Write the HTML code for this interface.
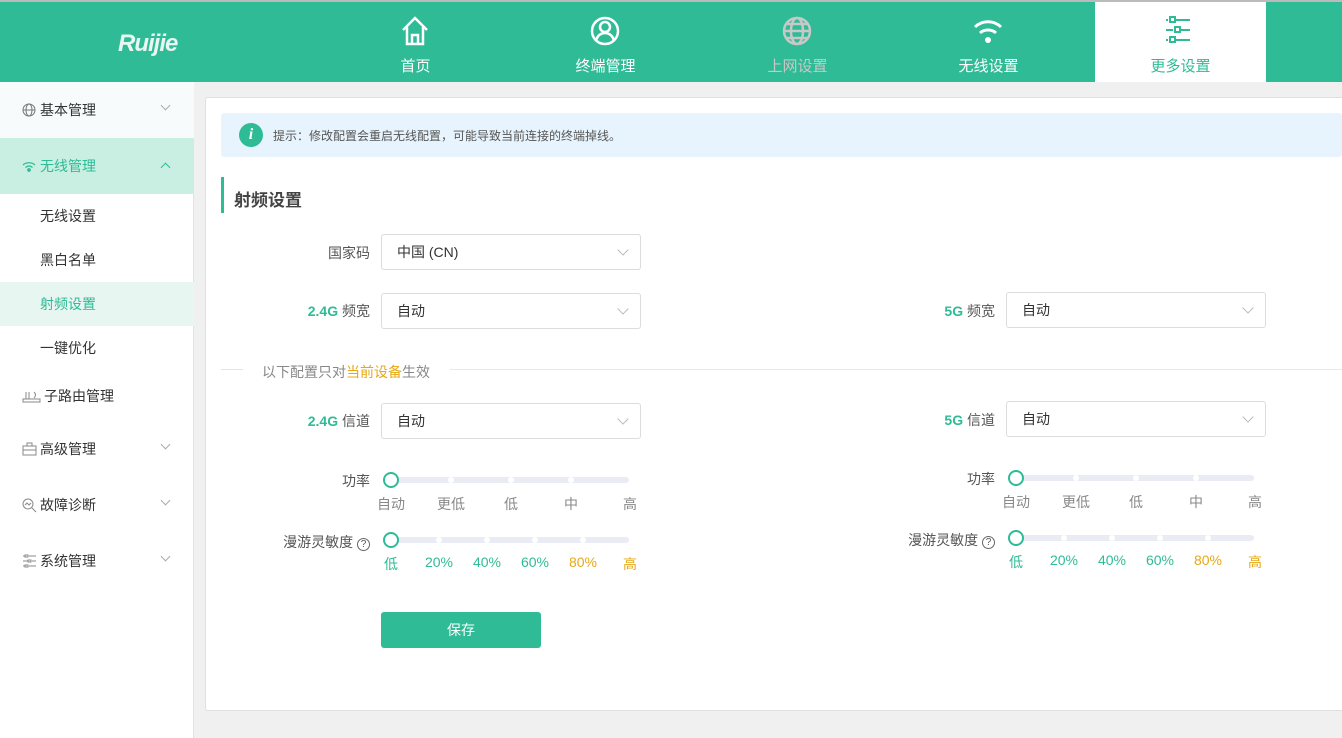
<!DOCTYPE html>
<html><head><meta charset="utf-8"><style>
*{margin:0;padding:0;box-sizing:border-box}
body{width:1342px;height:738px;overflow:hidden;background:#f0f0f0;font-family:"Liberation Sans","Noto Sans CJK SC",sans-serif;font-size:13px;color:#333;position:relative}
.top{position:absolute;left:0;top:0;width:1342px;height:82px;background:#2fbb96;border-top:2px solid #bbb}
.logo{position:absolute;left:118px;top:28px;color:#e8f7f2;font-style:italic;font-weight:bold;font-size:24px;letter-spacing:-1px}
.nav{position:absolute;top:0;width:171px;height:80px;text-align:center;color:#fff;font-size:15px}
.nav svg{position:absolute;left:69px;top:13px}
.nav span{position:absolute;left:0;right:0;top:53px}
.side{position:absolute;left:0;top:82px;width:194px;height:656px;background:#fff;border-right:1px solid #e3e3e3}
.it{position:absolute;left:0;width:194px;height:56px;line-height:56px;padding-left:40px;font-size:14px}
.it .ic{position:absolute;left:22px;top:21px}
.chev{position:absolute;left:162px;top:20px;width:7px;height:7px;border-right:1px solid #aaa;border-bottom:1px solid #aaa;transform:rotate(45deg)}
.chev.up{top:26px;transform:rotate(-135deg);border-color:#2fbb96}
.sub{position:absolute;left:0;width:194px;height:44px;line-height:44px;padding-left:40px;font-size:14px}
.card{position:absolute;left:205px;top:97px;width:1140px;height:614px;background:#fff;border:1px solid #e0e0e0;border-radius:3px}
.tip{position:absolute;left:221px;top:113px;width:1121px;height:44px;background:#e8f4fd;border-radius:3px}
.lbl{position:absolute;text-align:right;font-size:14px;color:#555}
.g{color:#2fbb96;font-weight:bold}
.sel{position:absolute;width:260px;height:36px;border:1px solid #dcdcdc;border-radius:3px;line-height:34px;padding-left:15px;font-size:14px;color:#333;background:#fff}
.sel:after{content:"";position:absolute;right:13px;top:11px;width:7px;height:7px;border-right:1px solid #bbb;border-bottom:1px solid #bbb;transform:rotate(45deg)}
.track{position:absolute;height:6px;background:#e9ecf3;border-radius:3px}
.knob{position:absolute;width:16px;height:16px;border:2px solid #2fbb96;border-radius:50%;background:#fff}
.dot{position:absolute;top:0;width:6px;height:6px;background:#fff;border-radius:3px}
.tk{position:absolute;font-size:14px;color:#888;transform:translateX(-50%)}
</style></head><body>
<div class="top">
<div class="logo">Ruijie</div>
<div class="nav" style="left:330px"><svg width="32" height="32" viewBox="0 0 32 32" fill="none" stroke="#fff" stroke-width="2.5"><path d="M4 15 L16 3 L28 15 M8 12 V29 H24 V12 M13 29 V20 H19 V29"/></svg><span>首页</span></div>
<div class="nav" style="left:520px"><svg width="32" height="32" viewBox="0 0 32 32" fill="none" stroke="#fff" stroke-width="2.5"><circle cx="16" cy="16" r="13"/><circle cx="16" cy="12" r="5"/><path d="M7 25c2-5 5-7 9-7s7 2 9 7"/></svg><span>终端管理</span></div>
<div class="nav" style="left:712px;color:#c8c8c8"><svg width="32" height="32" viewBox="0 0 32 32" fill="none" stroke="#c8c8c8" stroke-width="2.5"><circle cx="16" cy="16" r="13"/><ellipse cx="16" cy="16" rx="6" ry="13"/><path d="M3 16H29M5 9H27M5 23H27"/></svg><span>上网设置</span></div>
<div class="nav" style="left:903px"><svg width="32" height="32" viewBox="0 0 32 32" fill="none" stroke="#fff" stroke-width="3"><path d="M3 12c7-7 19-7 26 0M8 18c4-4 12-4 16 0"/><circle cx="16" cy="25" r="3" fill="#fff" stroke="none"/></svg><span>无线设置</span></div>
<div class="nav" style="left:1095px;background:#fff;color:#2fbb96"><svg width="32" height="32" viewBox="0 0 32 32" fill="none" stroke="#2fbb96" stroke-width="2"><path d="M2 5H4M12 5H26M2 15H9M17 15H26M2 25H4M12 25H26"/><rect x="6" y="2" width="5" height="5"/><rect x="11" y="12" width="5" height="5"/><rect x="6" y="22" width="5" height="5"/></svg><span>更多设置</span></div>
</div>
<div class="side">
<div class="it" style="top:0;background:#f7fbfc"><svg class="ic" width="14" height="14" viewBox="0 0 14 14" fill="none" stroke="#777"><circle cx="7" cy="7" r="6"/><ellipse cx="7" cy="7" rx="3" ry="6"/><path d="M1 7H13"/></svg>基本管理<span class="chev"></span></div>
<div class="it" style="top:56px;background:#c9efe3;color:#2fbb96"><svg class="ic" width="14" height="14" viewBox="0 0 14 14" fill="none" stroke="#2fbb96" stroke-width="1.3"><path d="M1 6c3-3 9-3 12 0M3.5 8.5c2-2 5-2 7 0"/><circle cx="7" cy="11" r="1.2" fill="#2fbb96"/></svg>无线管理<span class="chev up"></span></div>
<div class="sub" style="top:112px">无线设置</div>
<div class="sub" style="top:156px">黑白名单</div>
<div class="sub" style="top:200px;background:#e8f6f1;color:#2fbb96">射频设置</div>
<div class="sub" style="top:244px">一键优化</div>
<div class="it" style="top:286px;padding-left:44px"><svg class="ic" width="20" height="14" viewBox="0 0 20 14" fill="none" stroke="#888"><path d="M1 10H18V13H1Z M4 3V10M7 3V10M12 3C14 5 14 7 12 9"/></svg>子路由管理</div>
<div class="it" style="top:339px"><svg class="ic" width="15" height="14" viewBox="0 0 15 14" fill="none" stroke="#888"><rect x="1" y="4" width="13" height="9"/><path d="M5 4V1H10V4M1 8H14"/></svg>高级管理<span class="chev"></span></div>
<div class="it" style="top:395px"><svg class="ic" width="15" height="15" viewBox="0 0 15 15" fill="none" stroke="#888"><circle cx="6" cy="6" r="5"/><path d="M10 10L14 14M3 7L5 5L7 7L9 5"/></svg>故障诊断<span class="chev"></span></div>
<div class="it" style="top:451px"><svg class="ic" width="15" height="14" viewBox="0 0 15 14" fill="none" stroke="#888"><path d="M1 2H3M7 2H14M1 7H6M10 7H14M1 12H3M7 12H14"/><rect x="3" y="1" width="3" height="2"/><rect x="6" y="6" width="3" height="2"/><rect x="3" y="11" width="3" height="2"/></svg>系统管理<span class="chev"></span></div>
</div>
<div class="card"></div>
<div class="tip"><div style="position:absolute;left:18px;top:10px;width:24px;height:24px;border-radius:12px;background:#2fbb96;color:#fff;font:italic bold 16px 'Liberation Serif',serif;text-align:center;line-height:24px">i</div><div style="position:absolute;left:52px;top:14px;font-size:12px;color:#555">提示：修改配置会重启无线配置，可能导致当前连接的终端掉线。</div></div>
<div style="position:absolute;left:221px;top:177px;width:3px;height:36px;background:#2fbb96"></div>
<div style="position:absolute;left:234px;top:186px;font-size:17px;font-weight:bold;color:#444">射频设置</div>
<div class="lbl" style="left:280px;width:90px;top:243px">国家码</div>
<div class="sel" style="left:381px;top:234px">中国 (CN)</div>
<div class="lbl" style="left:270px;width:100px;top:301px"><span class="g">2.4G</span> 频宽</div>
<div class="sel" style="left:381px;top:293px">自动</div>
<div class="lbl" style="left:900px;width:95px;top:301px"><span class="g">5G</span> 频宽</div>
<div class="sel" style="left:1006px;top:292px">自动</div>
<div style="position:absolute;left:221px;top:369px;width:22px;height:1px;background:#e3e3e3"></div>
<div style="position:absolute;left:262px;top:362px;font-size:14px;color:#888">以下配置只对<span style="color:#e6a817">当前设备</span>生效</div>
<div style="position:absolute;left:450px;top:369px;width:892px;height:1px;background:#e8e8e8"></div>
<div class="lbl" style="left:270px;width:100px;top:411px"><span class="g">2.4G</span> 信道</div>
<div class="sel" style="left:381px;top:403px">自动</div>
<div class="lbl" style="left:900px;width:95px;top:410px"><span class="g">5G</span> 信道</div>
<div class="sel" style="left:1006px;top:401px">自动</div>

<div class="lbl" style="left:300px;width:70px;top:471px">功率</div>
<div class="track" style="left:391px;top:477px;width:238px"><div class="dot" style="left:57px"></div><div class="dot" style="left:117px"></div><div class="dot" style="left:177px"></div></div>
<div class="knob" style="left:383px;top:472px"></div>
<div class="tk" style="left:391px;top:494px">自动</div><div class="tk" style="left:451px;top:494px">更低</div><div class="tk" style="left:511px;top:494px">低</div><div class="tk" style="left:571px;top:494px">中</div><div class="tk" style="left:630px;top:494px">高</div>
<div class="lbl" style="left:260px;width:110px;top:532px">漫游灵敏度 <span style="display:inline-block;width:13px;height:13px;border:1px solid #666;border-radius:7px;font-size:10px;line-height:11px;text-align:center">?</span></div>
<div class="track" style="left:391px;top:537px;width:238px"><div class="dot" style="left:45px"></div><div class="dot" style="left:93px"></div><div class="dot" style="left:141px"></div><div class="dot" style="left:189px"></div></div>
<div class="knob" style="left:383px;top:532px"></div>
<div class="tk" style="left:391px;top:554px;color:#2fbb96">低</div><div class="tk" style="left:439px;top:554px;color:#2fbb96">20%</div><div class="tk" style="left:487px;top:554px;color:#2fbb96">40%</div><div class="tk" style="left:535px;top:554px;color:#2fbb96">60%</div><div class="tk" style="left:583px;top:554px;color:#e6a817">80%</div><div class="tk" style="left:630px;top:554px;color:#e6a817">高</div>

<div class="lbl" style="left:925px;width:70px;top:469px">功率</div>
<div class="track" style="left:1016px;top:475px;width:238px"><div class="dot" style="left:57px"></div><div class="dot" style="left:117px"></div><div class="dot" style="left:177px"></div></div>
<div class="knob" style="left:1008px;top:470px"></div>
<div class="tk" style="left:1016px;top:492px">自动</div><div class="tk" style="left:1076px;top:492px">更低</div><div class="tk" style="left:1136px;top:492px">低</div><div class="tk" style="left:1196px;top:492px">中</div><div class="tk" style="left:1255px;top:492px">高</div>
<div class="lbl" style="left:885px;width:110px;top:530px">漫游灵敏度 <span style="display:inline-block;width:13px;height:13px;border:1px solid #666;border-radius:7px;font-size:10px;line-height:11px;text-align:center">?</span></div>
<div class="track" style="left:1016px;top:535px;width:238px"><div class="dot" style="left:45px"></div><div class="dot" style="left:93px"></div><div class="dot" style="left:141px"></div><div class="dot" style="left:189px"></div></div>
<div class="knob" style="left:1008px;top:530px"></div>
<div class="tk" style="left:1016px;top:552px;color:#2fbb96">低</div><div class="tk" style="left:1064px;top:552px;color:#2fbb96">20%</div><div class="tk" style="left:1112px;top:552px;color:#2fbb96">40%</div><div class="tk" style="left:1160px;top:552px;color:#2fbb96">60%</div><div class="tk" style="left:1208px;top:552px;color:#e6a817">80%</div><div class="tk" style="left:1255px;top:552px;color:#e6a817">高</div>

<div style="position:absolute;left:381px;top:612px;width:160px;height:36px;background:#2fbb96;border-radius:3px;color:#fff;text-align:center;line-height:36px;font-size:14px">保存</div>
</body></html>
